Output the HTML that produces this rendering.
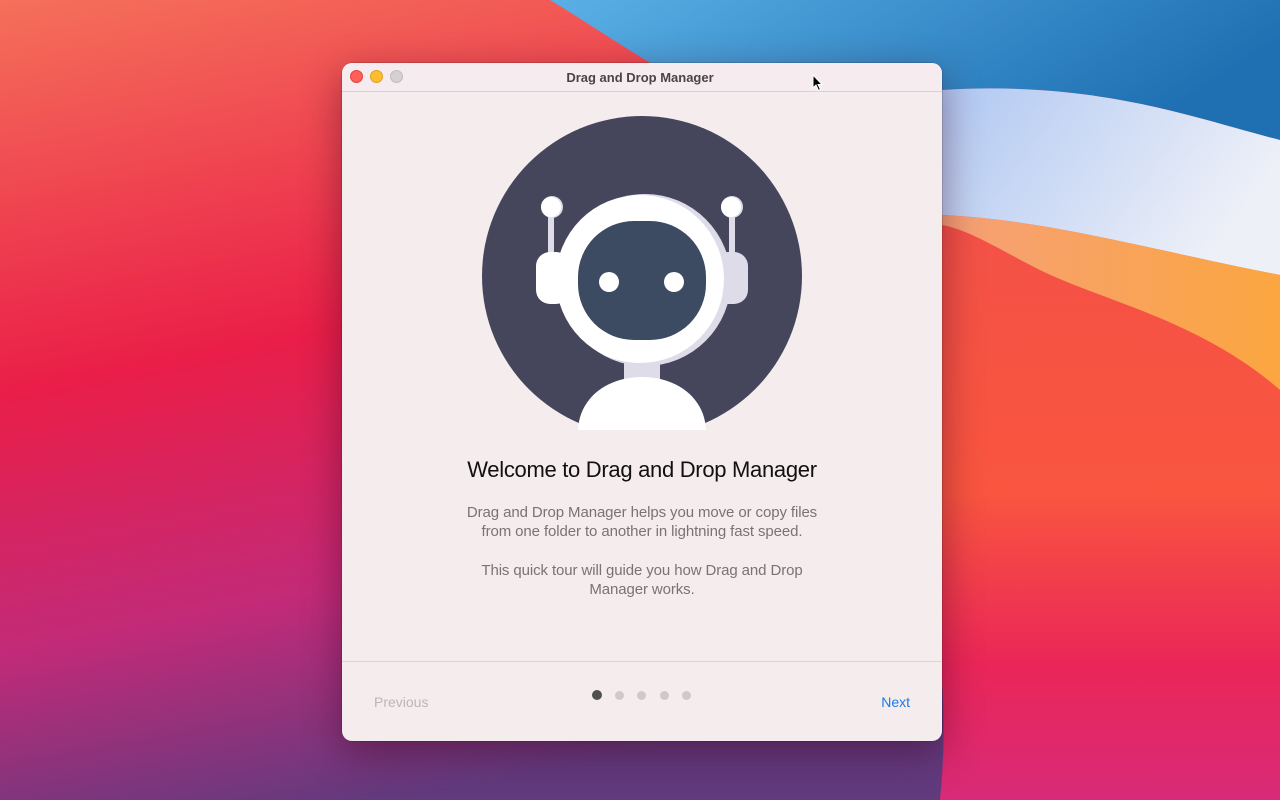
<!DOCTYPE html>
<html><head><meta charset="utf-8"><style>
html,body{margin:0;padding:0;width:1280px;height:800px;overflow:hidden;font-family:"Liberation Sans",sans-serif}
.bg{position:absolute;left:0;top:0}
.win{position:absolute;left:342px;top:63px;width:600px;height:678px;background:#f4eced;border-radius:10px;box-shadow:0 12px 40px rgba(60,0,30,.45),0 0 0 .5px rgba(0,0,0,.25);overflow:hidden}
.tb{height:28px;background:#f6ecef;border-bottom:1px solid #d8d0d2;position:relative}
.tb .t{position:absolute;left:-4px;right:0;top:7px;text-align:center;font-size:13px;font-weight:bold;color:#4a4446}
.d{position:absolute;top:7px;width:12px;height:12px;border-radius:50%}
h1{position:absolute;top:394px;left:0;right:0;text-align:center;font-size:22px;font-weight:normal;color:#111;margin:0;letter-spacing:-.3px}
.p{position:absolute;left:0;right:0;text-align:center;font-size:15px;line-height:19px;color:#7a7375;letter-spacing:-.1px}
.sep{position:absolute;top:598px;left:0;right:0;height:1px;background:#ddd4d6}
.prev{position:absolute;left:32px;top:631px;font-size:14px;color:#bdb5b7}
.next{position:absolute;right:32px;top:631px;font-size:14px;color:#1a7ce6}
.dot{position:absolute;top:628px;width:9px;height:9px;border-radius:50%;background:#d0c9cb}
</style></head><body>
<svg class="bg" width="1280" height="800" viewBox="0 0 1280 800">
<defs>
<linearGradient id="g1" x1="0" y1="0" x2="0.3" y2="1"><stop offset="0" stop-color="#f5705a"/><stop offset=".45" stop-color="#ea1e48"/><stop offset=".75" stop-color="#c22a78"/><stop offset="1" stop-color="#623a7e"/></linearGradient>
<linearGradient id="g2" x1="0" y1="0" x2="1" y2="0.3"><stop offset="0" stop-color="#5ab0e6"/><stop offset="1" stop-color="#1e70b2"/></linearGradient>
<linearGradient id="g3" x1="0" y1="0" x2="1" y2="0.4"><stop offset="0" stop-color="#b0c8f2"/><stop offset="1" stop-color="#eef0f8"/></linearGradient>
<linearGradient id="g4" x1="0" y1="0" x2="1" y2="0"><stop offset="0" stop-color="#f6a078"/><stop offset="1" stop-color="#fba640"/></linearGradient>
<linearGradient id="g5" x1="0" y1="0" x2="0" y2="1"><stop offset="0" stop-color="#f2504a"/><stop offset=".55" stop-color="#f9553f"/><stop offset=".8" stop-color="#ea2658"/><stop offset="1" stop-color="#d82a78"/></linearGradient>
</defs>
<rect width="1280" height="800" fill="url(#g1)"/>
<path d="M700 120 L1280 120 L1280 800 L940 800 C960 600 900 400 700 120Z" fill="url(#g5)"/>
<path d="M550 0 L1280 0 L1280 140 C1200 120 1100 80 942 90 L700 90 C640 60 600 30 550 0Z" fill="url(#g2)"/>
<path d="M942 90 C1100 80 1200 120 1280 140 L1280 275 C1150 250 1050 220 942 215Z" fill="url(#g3)"/>
<path d="M942 215 C1050 220 1150 250 1280 275 L1280 390 C1200 320 1100 300 1040 270 C1000 250 970 230 942 225Z" fill="url(#g4)"/>
</svg>
<div class="win">
<div class="tb">
<div class="d" style="left:8px;background:#fe5f57;border:.5px solid #e0443e;width:11px;height:11px"></div>
<div class="d" style="left:28px;background:#febc2e;border:.5px solid #dea123;width:11px;height:11px"></div>
<div class="d" style="left:48px;background:#d6d0d2;border:.5px solid #c2bcbe;width:11px;height:11px"></div>
<div class="t">Drag and Drop Manager</div>
</div>
<svg style="position:absolute;left:0;top:0" width="600" height="400" viewBox="342 63 600 400">
<defs><clipPath id="c"><rect x="470" y="100" width="340" height="330"/></clipPath></defs>
<g clip-path="url(#c)">
<circle cx="642" cy="276" r="160" fill="#45465b"/>
<rect x="548" y="212" width="6" height="45" fill="#dedce8"/>
<rect x="729" y="212" width="6" height="45" fill="#dedce8"/>
<circle cx="552" cy="207" r="11" fill="#dedce8"/><circle cx="551" cy="207" r="10" fill="#fff"/>
<circle cx="732" cy="207" r="11" fill="#dedce8"/><circle cx="731" cy="207" r="10" fill="#fff"/>
<rect x="536" y="252" width="34" height="52" rx="14" fill="#fff"/>
<rect x="714" y="252" width="34" height="52" rx="14" fill="#dedce8"/>
<rect x="624" y="355" width="36" height="28" fill="#dedce8"/>
<path d="M578 432 C578 400 605 377 642 377 C679 377 706 400 706 432Z" fill="#fff"/>
<ellipse cx="645" cy="280" rx="86" ry="86" fill="#dedce8"/>
<ellipse cx="640" cy="279" rx="84" ry="84" fill="#fff"/>
<rect x="578" y="221" width="128" height="119" rx="56" fill="#3c4a62"/>
<circle cx="609" cy="282" r="10" fill="#fff"/>
<circle cx="674" cy="282" r="10" fill="#fff"/>
</g>
</svg>
<h1>Welcome to Drag and Drop Manager</h1>
<div class="p" style="top:440px">Drag and Drop Manager helps you move or copy files<br>from one folder to another in lightning fast speed.</div>
<div class="p" style="top:498px">This quick tour will guide you how Drag and Drop<br>Manager works.</div>
<div class="sep"></div>
<div class="prev">Previous</div>
<div class="dot" style="left:250px;background:#505050;width:10px;height:10px;top:627px"></div>
<div class="dot" style="left:273px"></div>
<div class="dot" style="left:295px"></div>
<div class="dot" style="left:318px"></div>
<div class="dot" style="left:340px"></div>
<div class="next">Next</div>
</div>
<svg style="position:absolute;left:812px;top:74px" width="12" height="18" viewBox="0 0 12 18"><path d="M1 1 L1 14 L4 11 L6.5 16.5 L8.5 15.5 L6 10.5 L10 10.5Z" fill="#000" stroke="#fff" stroke-width="1"/></svg>
</body></html>
